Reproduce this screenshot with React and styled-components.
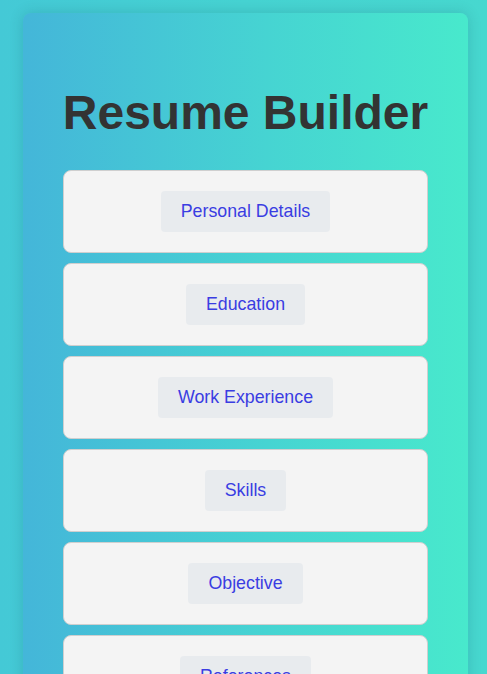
import React from "react";
import styled, { createGlobalStyle } from "styled-components";

const Global = createGlobalStyle`
  html, body { margin: 0; padding: 0; }
  body {
    font-family: "Liberation Sans", Arial, sans-serif;
    background: linear-gradient(90deg, #44c9d6 0%, #46d3d2 50%, #47d8cf 100%);
    min-height: 100vh;
  }
`;

const Page = styled.div`
  padding: 13px 19px 40px 23px;
`;

const Card = styled.div`
  background: linear-gradient(90deg, #44b6d9 0%, #46d4d2 55%, #48e9cc 100%);
  border-radius: 8px;
  box-shadow: 0 0 14px rgba(0, 60, 80, 0.18);
  padding: 40px 40px 40px;
`;

const Title = styled.h1`
  margin: 32px -20px 30px;
  font-size: 48px;
  line-height: 55px;
  font-weight: 700;
  color: #333333;
  text-align: center;
  white-space: nowrap;
`;

const List = styled.div`
  display: flex;
  flex-direction: column;
  gap: 10px;
`;

const Section = styled.div`
  background: #f4f4f4;
  border: 1px solid #cfcfcf;
  border-radius: 8px;
  padding: 20px;
  display: flex;
  justify-content: center;
`;

const SectionButton = styled.button`
  font-family: "Liberation Sans", Arial, sans-serif;
  font-size: 17.8px;
  line-height: 21px;
  padding: 10px 20px;
  border: none;
  border-radius: 4px;
  background: #e8ebee;
  color: #3a3de2;
  cursor: pointer;
`;

const sections = [
  "Personal Details",
  "Education",
  "Work Experience",
  "Skills",
  "Objective",
  "References",
];

export default function App() {
  return (
    <>
      <Global />
      <Page>
        <Card>
          <Title>Resume Builder</Title>
          <List>
            {sections.map((s) => (
              <Section key={s}>
                <SectionButton>{s}</SectionButton>
              </Section>
            ))}
          </List>
        </Card>
      </Page>
    </>
  );
}
